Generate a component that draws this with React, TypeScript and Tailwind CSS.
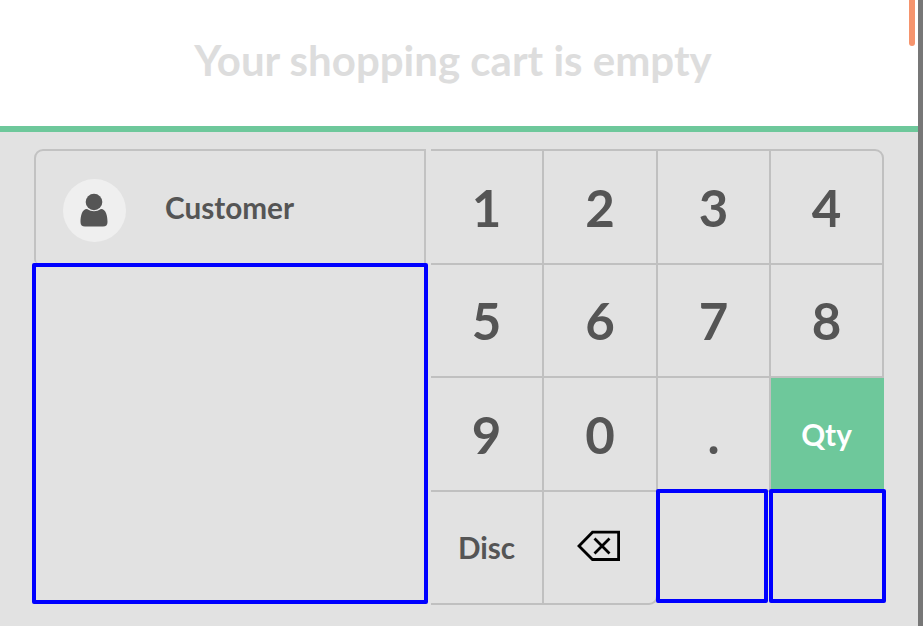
import type { ReactNode } from "react";

function Key({ children, className = "" }: { children?: ReactNode; className?: string }) {
  return (
    <div className={`flex items-center justify-center border-r-2 border-b-2 border-[#c0c0c0] ${className}`}>
      {children}
    </div>
  );
}

const digits = ["1", "2", "3", "4", "5", "6", "7", "8", "9", "0", "."];

export default function App() {
  return (
    <div className="flex h-[626px] w-[923px] overflow-hidden bg-[#e2e2e2] font-['Lato',sans-serif] font-bold text-[#555]">
      <main className="relative w-[918px]">
        <div className="flex h-[132px] justify-center border-b-[6px] border-[#6ec89b] bg-white pr-[12px] pt-[32px] text-[42px] leading-[56px] text-[#ddd]">
          Your shopping cart is empty
        </div>
        <div className="flex pl-[34px] pt-[17px]">
          <div className="w-[397px]">
            <div className="flex h-[114px] w-[392px] items-center rounded-tl-[9px] rounded-bl-[4px] border-2 border-b-0 border-[#c2c2c2] pl-[27px] text-[29.7px]">
              <div className="mt-[6px] flex size-[63px] items-center justify-center rounded-full bg-[#efefef]">
                <svg width="28" height="34" viewBox="0 0 28 34" fill="#555" className="-ml-px -mt-px">
                  <circle cx="14" cy="9" r="8.3" />
                  <path d="M7 16C2 16 .5 23 .5 29Q.5 33.5 5 33.5H23Q27.500 33.500 27.500 29C27.500 23 26 16 21 16Q14 20.500 7 16Z" />
                </svg>
              </div>
              <span className="ml-[39px] mt-[2px]">Customer</span>
            </div>
            <div className="-ml-[2px] h-[341px] w-[396px] rounded-[2px] border-4 border-[#00f]" />
          </div>
          <div className="grid h-[456px] w-[453px] grid-cols-[113px_114px_113px_113px] grid-rows-[116px_113px_114px_113px]">
            {digits.map((v, i) => (
              <Key key={v} className={`pt-[2px] text-[51px] ${i < 4 ? "border-t-2" : ""} ${i === 3 ? "rounded-tr-[9px]" : ""}`}>{v}</Key>
            ))}
            <div className="flex items-center justify-center bg-[#6ec89b] pr-[2px] text-[29.7px] font-bold text-white">Qty</div>
            <Key className="pt-[2px] text-[29.7px]">Disc</Key>
            <Key className="rounded-br-[9px] pr-[3px]">
              <svg width="44" height="32" viewBox="0 0 44 32" fill="none" stroke="#000" strokeWidth="2.8" className="-mt-[3px]">
                <path d="M15.500 2.200H41.600V29.500H15.500L2 16ZM17.500 8.500L32.500 23.500M32.500 8.500L17.500 23.500" />
              </svg>
            </Key>
            <div className="-ml-[2px] -mt-[3px] h-[114px] w-[112px] rounded-[2px] border-4 border-[#00f]" />
            <div className="-ml-[2px] -mt-[3px] h-[114px] w-[117px] rounded-[2px] border-4 border-[#00f]" />
          </div>
        </div>
        <div className="absolute right-[3px] top-0 h-[46px] w-[6px] rounded-b-[3px] bg-[#f6946d]" />
      </main>
      <div className="w-[5px] bg-[#777]" />
    </div>
  );
}
